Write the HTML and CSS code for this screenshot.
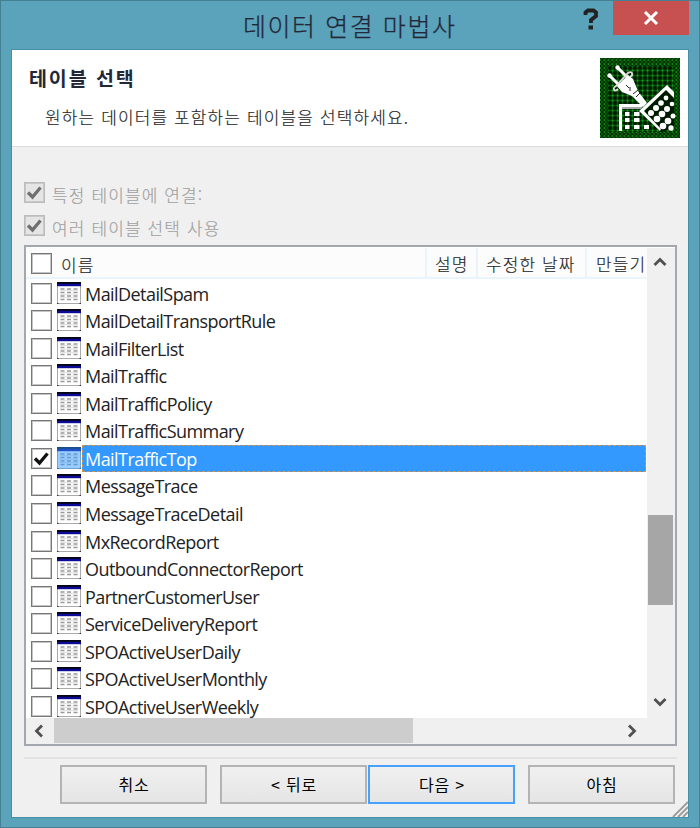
FILE: index.html
```
<!DOCTYPE html>
<html lang="ko">
<head>
<meta charset="utf-8">
<title>데이터 연결 마법사</title>
<link rel="stylesheet" href="styles.css">
</head>
<body>
<svg class="defs" width="0" height="0">
  <defs>
    <pattern id="mesh" width="5" height="5" patternUnits="userSpaceOnUse">
      <rect width="5" height="5" fill="#001a00"/>
      <path d="M0 2.500H5M2.500 0V5" stroke="#07520b" stroke-width="1.700"/>
      <rect x="1.800" y="1.800" width="1.600" height="1.600" fill="#18a01e"/>
    </pattern>
    <pattern id="rim" width="4" height="4" patternUnits="userSpaceOnUse">
      <rect width="4" height="4" fill="#075a0a"/>
      <path d="M0 0L4 4M4 0L0 4" stroke="#002400" stroke-width=".8"/>
      <rect x="0" y="1.500" width="1.200" height="1.200" fill="#18a01e"/>
    </pattern>
    <g id="table">
      <rect x=".5" y=".5" width="23" height="21" fill="#fff" stroke="#aaa"/>
      <path d="M0 1H24" stroke="#050514" stroke-width="2"/>
      <path d="M0 3H24" stroke="#0a0a96" stroke-width="2.400"/>
      <path d="M3.500 7H20.500M3.500 10.500H20.500M3.500 14H20.500M3.500 17.500H20.500" stroke="#999" stroke-width="1.300" stroke-dasharray="4 2.500"/>
      <path d="M3 8.700H21M3 12.200H21M3 15.700H21" stroke="#ddd"/>
      <path d="M0 21.500H1.500M22.500 21.500H24" stroke="#333"/>
    </g>
    <path id="check" d="M4 10.500L8.500 15L16.500 5.500" fill="none" stroke-width="3.300"/>
  </defs>
</svg>
<div class="window">
  <header class="titlebar">
    <h1>데이터 연결 마법사</h1>
    <svg class="help" width="16" height="24" viewBox="0 0 16 24"><path d="M2.500 8V5.500L5 3.500H10.500L13 5.500V9L8 13V16" fill="none" stroke="#222" stroke-width="3.800"/><rect x="5.500" y="18.500" width="4.500" height="4" fill="#222"/></svg>
    <button class="close" aria-label="닫기"><svg width="16" height="14" viewBox="0 0 16 14"><path d="M2 1L14 13M14 1L2 13" stroke="#fff" stroke-width="3"/></svg></button>
  </header>
  <main class="dialog">
    <section class="intro">
      <div>
        <h2>테이블 선택</h2>
        <p>원하는 데이터를 포함하는 테이블을 선택하세요.</p>
      </div>
      <svg class="emblem" width="80" height="80" viewBox="0 0 80 80">
        <rect width="80" height="80" fill="url(#rim)"/>
        <rect x="8" y="8" width="66" height="66" fill="url(#mesh)"/>
        <path d="M19 73V46H43L41 51H22V73Z" fill="#fff"/>
        <path d="M22 50H41" stroke="#aaa" stroke-width="2"/>
        <g fill="#fff"><rect x="25" y="54" width="4.500" height="4"/><rect x="34" y="54" width="5.500" height="4"/><rect x="25" y="60" width="4.500" height="4"/><rect x="34" y="60" width="5.500" height="4"/><rect x="25" y="67" width="4.500" height="4"/><rect x="34" y="67" width="5.500" height="4"/><rect x="44" y="67" width="5" height="4"/></g>
        <path d="M45 47L66 29L74 39V70L61 74L41 54Z" fill="#001c00"/>
        <path d="M60 73L39 53L67 27L74 34V40L66 32L44 53L61 71Z" fill="#fff"/>
        <g fill="#fff"><circle cx="66" cy="40" r="2.400"/><circle cx="61" cy="45" r="2.800"/><circle cx="56" cy="50" r="3"/><circle cx="51" cy="55" r="3"/><circle cx="72" cy="46" r="2.300"/><circle cx="67" cy="51" r="3"/><circle cx="62" cy="56" r="3.300"/><circle cx="57" cy="61" r="3.300"/><circle cx="73" cy="58" r="2.500"/><circle cx="68" cy="63" r="3.300"/><circle cx="63" cy="68" r="3.300"/><circle cx="71" cy="70" r="2.700"/></g>
        <path d="M10 18L19 27M18 10L27 19" stroke="#fff" stroke-width="3"/>
        <circle cx="9.500" cy="17.500" r="2.200" fill="#fff"/><circle cx="17.500" cy="9.500" r="2.200" fill="#fff"/>
        <path d="M18 31C14 35 12 30 16 28L28 15C32 12 34 17 30 19" fill="none" stroke="#ddd" stroke-width="1.800"/>
        <path d="M17 28L28 17L33 21L38 33L47 45L43 49L32 38L22 34Z" fill="#fff"/>
        <path d="M26 27L29 30M30 29L30 33M33 36L38 32M36 39L40 35" stroke="#222"/>
      </svg>
    </section>
    <section class="body">
      <div class="option"><svg class="box off" width="21" height="21"><use href="#check"/></svg><span>특정 테이블에 연결:</span></div>
      <div class="option second"><svg class="box off" width="21" height="21"><use href="#check"/></svg><span>여러 테이블 선택 사용</span></div>
      <div class="list">
        <div class="view">
          <div class="head">
            <div class="name"><svg class="box" width="21" height="21"></svg><span>이름</span></div>
            <div class="desc">설명</div><div class="date">수정한 날짜</div><div class="made">만들기</div>
          </div>
          <div class="rows" id="rows"></div>
        </div>
        <div class="vscroll">
          <svg width="14" height="9" viewBox="0 0 14 9"><path d="M1.500 8L7 2.500L12.500 8"/></svg>
          <div class="vthumb"></div>
          <svg width="14" height="9" viewBox="0 0 14 9"><path d="M1.500 1L7 6.500L12.500 1"/></svg>
        </div>
        <div class="hscroll">
          <svg width="9" height="14" viewBox="0 0 9 14"><path d="M8 1.500L2.500 7L8 12.500"/></svg>
          <div class="hthumb"></div>
          <svg width="9" height="14" viewBox="0 0 9 14"><path d="M1 1.500L6.500 7L1 12.500"/></svg>
        </div>
      </div>
      <footer><button>취소</button><button>&lt; 뒤로</button><button class="primary">다음 &gt;</button><button>아침</button></footer>
    </section>
    <svg class="grip" width="16" height="16"><path d="M1 16L16 1M6 16L16 6M11 16L16 11" stroke="#999" stroke-width="1.800"/></svg>
  </main>
</div>
<script src="rows.js"></script>
</body>
</html>
```
FILE: rows.js
```
const names = ["MailDetailSpam", "MailDetailTransportRule", "MailFilterList", "MailTraffic", "MailTrafficPolicy", "MailTrafficSummary", "MailTrafficTop", "MessageTrace", "MessageTraceDetail", "MxRecordReport", "OutboundConnectorReport", "PartnerCustomerUser", "ServiceDeliveryReport", "SPOActiveUserDaily", "SPOActiveUserMonthly", "SPOActiveUserWeekly"];
const selected = "MailTrafficTop";
document.getElementById("rows").innerHTML = names.map(name => {
  const on = name === selected;
  return `<div class="row${on ? " selected" : ""}"><svg class="box" width="21" height="21">${on ? '<use href="#check"/>' : ""}</svg><svg class="table" width="24" height="22"><use href="#table"/>${on ? '<rect width="24" height="22" fill="#3399ff" fill-opacity=".5"/>' : ""}</svg><span class="label"><span>${name}</span></span></div>`;
}).join("");
```
FILE: styles.css
```
* { box-sizing: border-box; }
body { margin: 0; font-family: "Open Sans", "Noto Sans CJK KR", sans-serif; color: #222; }
.defs { position: absolute; }
svg { flex: none; display: block; }
h1, h2, p { margin: 0; font-family: "Noto Sans CJK KR", sans-serif; white-space: nowrap; }
.window { width: 700px; height: 828px; background: #5ba2bb; border: 1px solid #457f93; padding: 0 10px 10px; }
.titlebar { height: 48px; display: flex; align-items: flex-start; }
h1 { margin-left: 232px; width: 340px; font-size: 25px; line-height: 48px; font-weight: 300; -webkit-text-stroke: .25px #222838; color: #222838; letter-spacing: 1.55px; }
.help { margin-top: 6px; }
.close { margin-left: 14px; width: 76px; height: 34px; border: 0; padding: 0; background: #c75050; display: flex; align-items: center; justify-content: center; }
.dialog { position: relative; width: 678px; height: 769px; border: 1px solid #478ea7; background: #f0f0f0; }
.intro { height: 97px; background: #fff; border-bottom: 1px solid #ddd; display: flex; justify-content: space-between; padding: 8px 8px 0 17px; }
h2 { margin-top: 5px; font-size: 19.5px; line-height: 30px; font-weight: 700; color: #222838; letter-spacing: 1.9px; }
p { margin: 10px 0 0 16px; font-size: 17px; line-height: 28px; font-weight: 300; -webkit-text-stroke: .15px #222; letter-spacing: 1.12px; }
.body { padding: 35px 12px 0; font-family: "Noto Sans CJK KR", sans-serif; }
.box { background: #fff; border: 1px solid #777; box-shadow: inset 0 0 0 1px #c4c4c4; stroke: #111; overflow: hidden; }
.box use { transform: translate(-1px, -1px); }
.box.off { background: #e5e5e5; border-color: #bcbcbc; box-shadow: inset 0 0 0 1px #c8c8c8; stroke: #707070; }
.option { display: flex; height: 21px; align-items: center; gap: 7px; color: #a0a0a0; font-size: 17px; font-weight: 300; -webkit-text-stroke: .15px #a0a0a0; white-space: nowrap; letter-spacing: 1.12px; }
.option span { padding-top: 3px; }
.second { margin-top: 12px; }
.list { margin-top: 9px; width: 653px; height: 501px; border: 2px solid #a3a7ae; padding-top: 1px; background: #fff; display: grid; grid-template-columns: 621px 28px; grid-template-rows: 470px 26px; overflow: hidden; }
.view { overflow: hidden; }
.head { height: 31px; background: #fcfcfc; border-bottom: 2px solid #eaf4fc; display: flex; font-size: 17px; font-weight: 300; -webkit-text-stroke: .15px #222; line-height: 32px; white-space: nowrap; letter-spacing: 1.1px; }
.head > div { border-right: 2px solid #eaf2fa; overflow: hidden; }
.head .name { width: 401px; display: flex; gap: 9px; padding: 5px 0 0 5px; }
.name span { line-height: 24px; }
.head .desc { width: 51px; padding-left: 8px; }
.head .date { width: 109px; padding-left: 8px; }
.head .made { flex: 1; padding-left: 9px; border: 0; }
.rows { height: 439px; padding-top: .5px; overflow: hidden; }
.row { height: 27.570px; display: flex; padding-left: 5px; }
.row .box { margin-top: 3px; }
.table { margin: 2px 0 0 5px; }
.label { flex: 1; height: 27.570px; padding-left: 3px; font: 18px/29px "Open Sans", sans-serif; letter-spacing: -.56px; white-space: nowrap; margin-left: 1px; margin-right: 1px; }
.selected .label { background: #3399ff; color: #fff; outline: 1px dashed #cf9352; outline-offset: -1px; }
.vscroll { background: #f0f0f0; display: flex; flex-direction: column; align-items: center; padding: 9px 2px 0 0; }
.vscroll path, .hscroll path { fill: none; stroke: #505050; stroke-width: 2.8; }
.vthumb { width: 25px; height: 90px; margin: 249px 0 93px; background: #a6a6a6; }
.hscroll { grid-column: 1 / 3; background: #f0f0f0; display: flex; align-items: flex-start; padding-left: 8px; }
.hscroll svg { margin-top: 6px; }
.hthumb { width: 359px; height: 25px; margin: 0 215px 0 11px; background: #cdcdcd; }
footer { margin-top: 11px; border-top: 2px solid #e2e2e2; padding: 6px 0 0 36px; display: flex; gap: 13px; width: 653px; }
footer button { width: 147px; height: 39px; flex: none; padding: 0 0 2px 1px; border: 2px solid #b4b4b4; background: linear-gradient(#f0f0f0, #e5e5e5); color: #000; font: 400 16px "Noto Sans CJK KR", sans-serif; letter-spacing: .8px; }
footer .primary { margin-left: -12px; border-color: #48a0ff; }
.grip { position: absolute; right: 0; bottom: 0; }
```
